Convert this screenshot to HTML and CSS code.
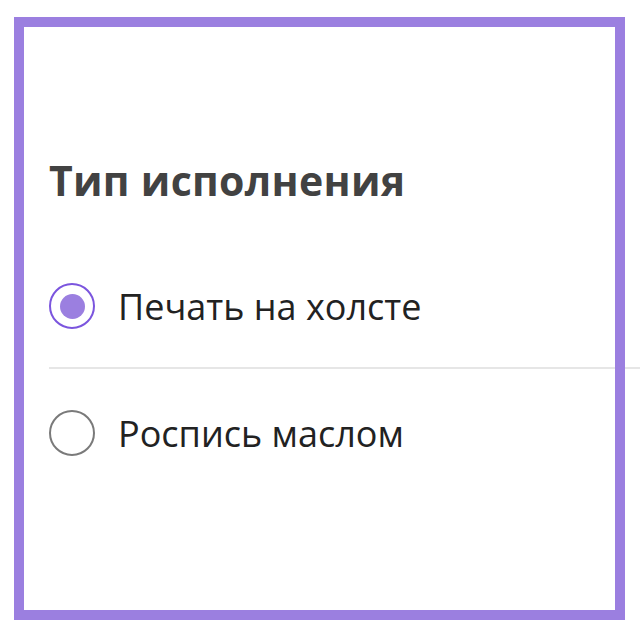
FILE: index.html
```html
<!DOCTYPE html>
<html lang="ru">
<head>
    <meta charset="UTF-8">
    <meta name="viewport" content="width=device-width, initial-scale=1.0">
    <title>Тип исполнения</title>
    <link rel="stylesheet" href="styles.css">
</head>
<body>
    <div id="panel">
        <h2 class="title">Тип исполнения</h2>

        <label class="option">
            <input type="radio" name="kind" checked>
            <span class="dot"></span>
            <span class="label-text">Печать на холсте</span>
        </label>
        <div class="divider"></div>
        <label class="option">
            <input type="radio" name="kind">
            <span class="dot"></span>
            <span class="label-text">Роспись маслом</span>
        </label>
    </div>

    <!-- рамка выделения поверх блока -->
    <div id="frame"></div>
</body>
</html>
```

FILE: styles.css
```css
body {
    margin: 0;
    overflow: hidden;
    background: white;
    font-family: 'Open Sans', 'Noto Sans', sans-serif;
}

#panel {
    padding: 150px 0 0 49px;
}

.title {
    margin: 0;
    font-size: 41px;
    font-weight: 700;
    line-height: 60px;
    letter-spacing: 0.3px;
    color: #424242;
}

.option {
    display: flex;
    align-items: center;
    gap: 23px;
    height: 46px;
    margin: 73px 0 38px;
    cursor: pointer;
}

.option + .divider + .option {
    margin-top: 41px;
}

.option input {
    display: none;
}

.dot {
    box-sizing: border-box;
    width: 46px;
    height: 46px;
    border: 2px solid #7a7a7a;
    border-radius: 50%;
    display: flex;
    align-items: center;
    justify-content: center;
}

.option input:checked + .dot {
    border-color: #7b55de;
}

.option input:checked + .dot::after {
    content: "";
    width: 25px;
    height: 25px;
    border-radius: 50%;
    background: #9b7fe0;
}

.label-text {
    font-size: 36px;
    color: #222;
}

.divider {
    height: 2px;
    background: #e6e6e6;
}

#frame {
    position: absolute;
    left: 14px;
    top: 17px;
    width: 591px;
    height: 583px;
    border: 10px solid #9b7fe0;
    pointer-events: none;
}
```
